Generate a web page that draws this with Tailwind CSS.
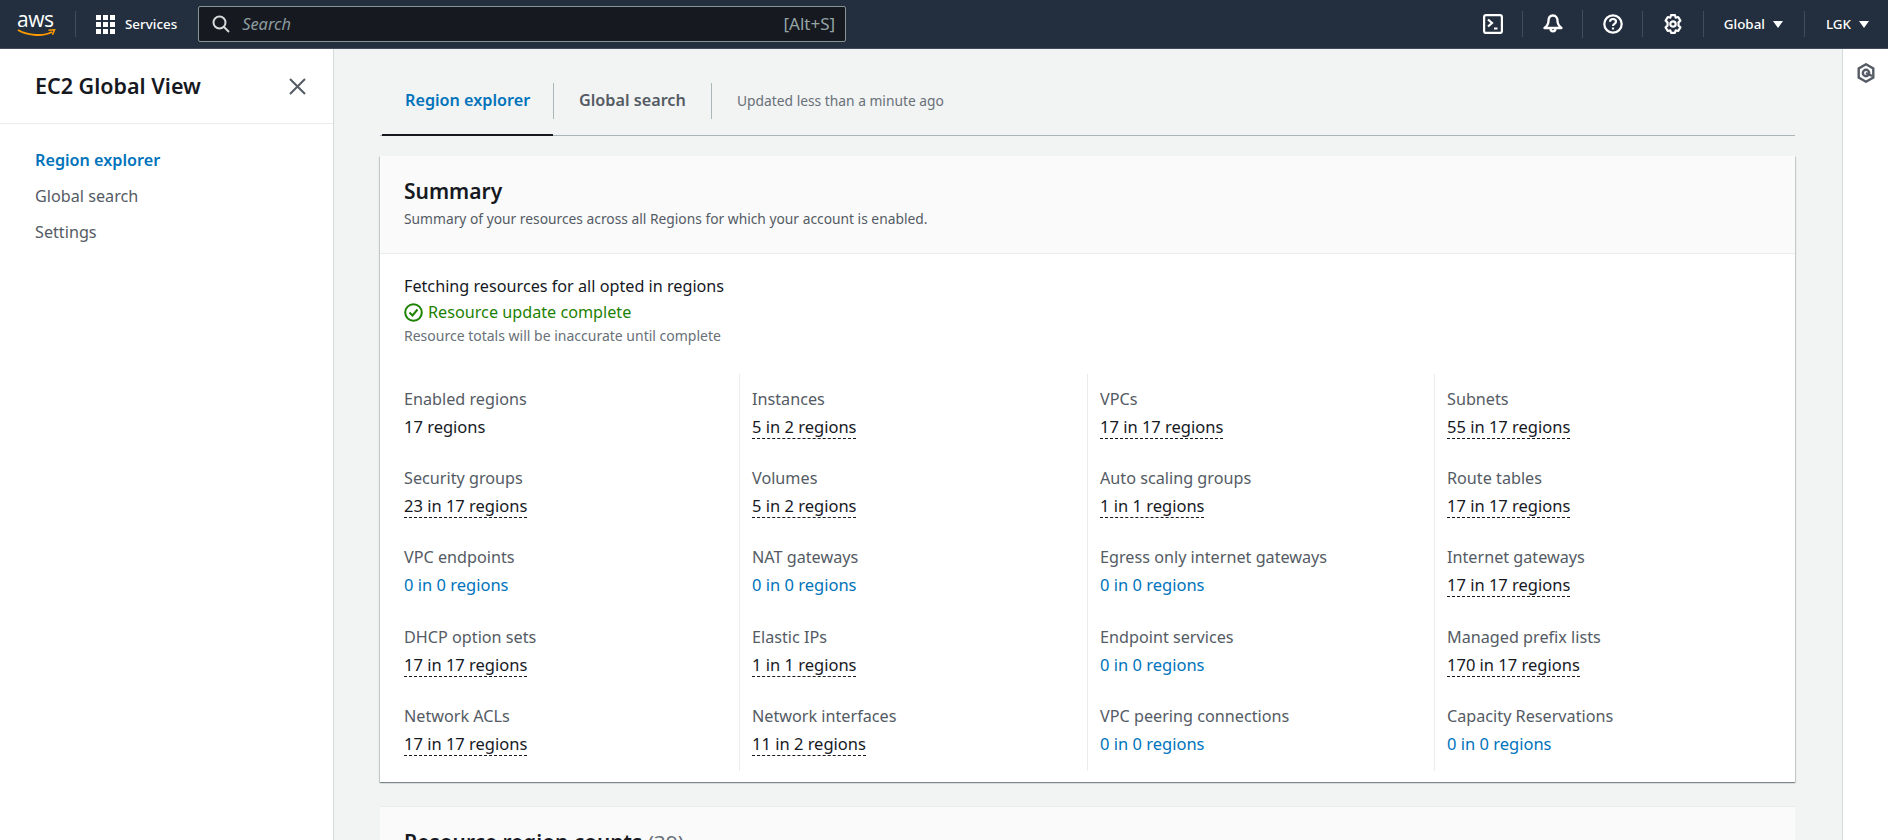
<!DOCTYPE html>
<html lang="en">
<head>
<meta charset="UTF-8">
<title>EC2 Global View</title>
<script src="https://cdn.jsdelivr.net/npm/@tailwindcss/browser@4"></script>
</head>
<body class="h-[840px] overflow-hidden bg-[#f2f3f3] font-['Noto_Sans',sans-serif] text-[16.200px] text-[#16191f]">

<!-- top nav -->
<header class="h-[49px] flex items-center bg-[#232f3e] border-b border-[#414d5c] text-white">
  <div class="w-[75px] h-[48px] pl-[17px] flex flex-col items-start justify-center shrink-0">
    <span class="font-['Open_Sans',sans-serif] text-[21px] leading-[17px] tracking-[-0.5px]">aws</span>
    <svg width="39" height="9" viewBox="0 0 39 9" class="mt-px"><path d="M1 1C11 7 27 7.500 35 3" fill="none" stroke="#f90" stroke-width="2"/><path d="M31.500 1.300l6-.5-2 5" fill="none" stroke="#f90" stroke-width="1.600"/></svg>
  </div>
  <div class="w-px h-[26px] bg-[#414d5c] shrink-0"></div>
  <svg width="19" height="19" viewBox="0 0 19 19" fill="#fff" class="ml-[20px] shrink-0">
    <rect x="0" y="0" width="5" height="5"/><rect x="7" y="0" width="5" height="5"/><rect x="14" y="0" width="5" height="5"/>
    <rect x="0" y="7" width="5" height="5"/><rect x="7" y="7" width="5" height="5"/><rect x="14" y="7" width="5" height="5"/>
    <rect x="0" y="14" width="5" height="5"/><rect x="7" y="14" width="5" height="5"/><rect x="14" y="14" width="5" height="5"/>
  </svg>
  <span class="ml-[10px] text-[13.400px] font-medium whitespace-nowrap">Services</span>
  <div class="ml-[21px] w-[648px] h-[36px] flex items-center bg-[#16191f] border border-[#879596] rounded-[2px] pl-[13px] pr-[10px] shrink-0">
    <svg width="18" height="18" viewBox="0 0 18 18" fill="none" stroke="#d5dbdb" stroke-width="2"><circle cx="7.500" cy="7.500" r="6"/><path d="M12 12l5 5"/></svg>
    <span class="ml-[12px] text-[16.400px] italic text-[#8d9ba0]">Search</span>
    <span class="ml-auto text-[17px] text-[#95a5a6]">[Alt+S]</span>
  </div>

  <div class="ml-auto flex items-center h-full">
    <svg width="20" height="20" viewBox="0 0 20 20" fill="none" stroke="#fff" stroke-width="2.200" class="mr-[19px]"><rect x="1.100" y="1.100" width="17.800" height="17.800" rx="2"/><path d="M5 5.500l4 3.500-4 3.500M11 14.500h3.500"/></svg>
    <div class="w-px h-[26px] bg-[#414d5c]"></div>
    <svg width="20" height="21" viewBox="0 0 20 21" fill="none" stroke="#fff" stroke-width="2.300" class="ml-[20px] mr-[19px]"><path d="M10 1.500c-3 0-4.500 2.500-4.500 5.500 0 3-1.500 5-4 7h17c-2.500-2-4-4-4-7 0-3-1.500-5.500-4.500-5.500z" stroke-linejoin="round"/><path d="M7.500 14.500a2.500 2.800 0 0 0 5 0"/></svg>
    <div class="w-px h-[28px] bg-[#414d5c]"></div>
    <svg width="20" height="20" viewBox="0 0 20 20" fill="none" stroke="#fff" stroke-width="2.200" class="ml-[20px] mr-[19px]"><circle cx="10" cy="10" r="8.700"/><path d="M7 7.800c0-1.700 1.300-2.800 3-2.800s3 1.100 3 2.600c0 2.400-3 2.200-3 4.400"/><path d="M10 13.500v2"/></svg>
    <div class="w-px h-[26px] bg-[#414d5c]"></div>
    <svg width="20" height="20" viewBox="0 0 20 20" fill="none" stroke="#fff" stroke-width="2.200" stroke-linejoin="round" class="mx-[20px]"><path d="M8 1.200h4l.7 2.500 2.500-.7 2.200 3.600-1.900 1.800v3.200l1.900 1.800-2.200 3.600-2.500-.7-.7 2.500H8l-.7-2.500-2.500.7-2.200-3.600 1.900-1.800V8.400L2.600 6.600 4.800 3l2.500.7z"/><circle cx="10" cy="10" r="2.700"/></svg>
    <div class="w-px h-[26px] bg-[#414d5c]"></div>
    <span class="ml-[20px] text-[13.400px] font-medium">Global</span>
    <svg width="10" height="7" viewBox="0 0 10 7" fill="#fff" class="ml-[8px]"><path d="M0 0h10L5 7z"/></svg>
    <div class="ml-[21px] w-px h-[26px] bg-[#414d5c]"></div>
    <span class="ml-[21px] text-[13.400px] font-medium">LGK</span>
    <svg width="10" height="7" viewBox="0 0 10 7" fill="#fff" class="ml-[8px] mr-[19px]"><path d="M0 0h10L5 7z"/></svg>
  </div>
</header>

<div class="flex h-[791px]">
  <!-- side nav -->
  <aside class="w-[334px] shrink-0 bg-white border-r border-[#d5dbdb]">
    <div class="h-[75px] pl-[35px] pr-[27px] flex items-center justify-between border-b border-[#eaeded]">
      <span class="text-[21.500px] font-semibold">EC2 Global View</span>
      <svg width="17" height="17" viewBox="0 0 17 17" fill="none" stroke="#545b64" stroke-width="2"><path d="M1 1l15 15M16 1L1 16"/></svg>
    </div>
    <nav class="pt-[18px] pl-[35px] flex flex-col text-[16.200px] leading-[36px] text-[#545b64]">
      <a class="font-semibold text-[#0073bb]">Region explorer</a>
      <a>Global search</a>
      <a>Settings</a>
    </nav>
  </aside>

  <!-- main -->
  <main class="w-[1508px] shrink-0 pl-[46px] pr-[47px]">
    <div class="h-[87px] pt-[34px] flex items-start border-b border-[#aab7b8]">
      <div class="ml-[2px] w-[171px] h-[53px] -mb-px border-b-2 border-[#16191f] pl-[23px] text-[#0073bb] font-semibold text-[16.200px] leading-[34px]">Region explorer</div>
      <div class="w-px h-[36px] bg-[#aab7b8]"></div>
      <div class="w-[157px] pl-[25px] text-[#545b64] font-semibold text-[16.200px] leading-[34px]">Global search</div>
      <div class="w-px h-[36px] bg-[#aab7b8]"></div>
      <div class="pl-[25px] text-[#687078] text-[13.800px] leading-[36px]">Updated less than a minute ago</div>
    </div>

    <section class="mt-[20px] h-[626px] bg-white shadow-[0_1px_1px_0_rgba(0,28,36,0.3),1px_1px_1px_0_rgba(0,28,36,0.15),-1px_1px_1px_0_rgba(0,28,36,0.15)]">
      <div class="h-[98px] pl-[24px] pt-[20px] bg-[#fafafa] border-b border-[#eaeded]">
        <h2 class="text-[21px] font-semibold leading-[30px]">Summary</h2>
        <p class="mt-px text-[13.800px] leading-[24px] text-[#545b64]">Summary of your resources across all Regions for which your account is enabled.</p>
      </div>
      <div class="pl-[24px] pt-[20px]">
        <p class="leading-[25px]">Fetching resources for all opted in regions</p>
        <p class="flex items-center leading-[26px] text-[#1d8102]">
          <svg width="19" height="19" viewBox="0 0 19 19" fill="none" stroke="#1d8102" stroke-width="2" class="mr-[5px]"><circle cx="9.500" cy="9.500" r="8.300"/><path d="M5.500 9.500l3 3 5-6"/></svg>
          Resource update complete
        </p>
        <p class="text-[14px] leading-[21px] text-[#687078]">Resource totals will be inaccurate until complete</p>
      </div>
      <div class="mt-[28px] grid grid-cols-[359px_348px_347px_1fr] h-[397px] text-[16.500px]">
        <!-- column 1 -->
        <div class="pl-[24px] pt-[12px]">
          <div class="h-[79.200px]"><p class="text-[16.200px] text-[#545b64] leading-[27px] mb-[2px]">Enabled regions</p><span>17 regions</span></div>
          <div class="h-[79.200px]"><p class="text-[16.200px] text-[#545b64] leading-[27px] mb-[2px]">Security groups</p><span class="border-b border-dashed border-[#16191f]">23 in 17 regions</span></div>
          <div class="h-[79.200px]"><p class="text-[16.200px] text-[#545b64] leading-[27px] mb-[2px]">VPC endpoints</p><span class="text-[#0073bb]">0 in 0 regions</span></div>
          <div class="h-[79.200px]"><p class="text-[16.200px] text-[#545b64] leading-[27px] mb-[2px]">DHCP option sets</p><span class="border-b border-dashed border-[#16191f]">17 in 17 regions</span></div>
          <div class="h-[67px]"><p class="text-[16.200px] text-[#545b64] leading-[27px] mb-[2px]">Network ACLs</p><span class="border-b border-dashed border-[#16191f]">17 in 17 regions</span></div>
        </div>
        <!-- column 2 -->
        <div class="pl-[12px] pt-[12px] border-l border-[#eaeded]">
          <div class="h-[79.200px]"><p class="text-[16.200px] text-[#545b64] leading-[27px] mb-[2px]">Instances</p><span class="border-b border-dashed border-[#16191f]">5 in 2 regions</span></div>
          <div class="h-[79.200px]"><p class="text-[16.200px] text-[#545b64] leading-[27px] mb-[2px]">Volumes</p><span class="border-b border-dashed border-[#16191f]">5 in 2 regions</span></div>
          <div class="h-[79.200px]"><p class="text-[16.200px] text-[#545b64] leading-[27px] mb-[2px]">NAT gateways</p><span class="text-[#0073bb]">0 in 0 regions</span></div>
          <div class="h-[79.200px]"><p class="text-[16.200px] text-[#545b64] leading-[27px] mb-[2px]">Elastic IPs</p><span class="border-b border-dashed border-[#16191f]">1 in 1 regions</span></div>
          <div class="h-[67px]"><p class="text-[16.200px] text-[#545b64] leading-[27px] mb-[2px]">Network interfaces</p><span class="border-b border-dashed border-[#16191f]">11 in 2 regions</span></div>
        </div>
        <!-- column 3 -->
        <div class="pl-[12px] pt-[12px] border-l border-[#eaeded]">
          <div class="h-[79.200px]"><p class="text-[16.200px] text-[#545b64] leading-[27px] mb-[2px]">VPCs</p><span class="border-b border-dashed border-[#16191f]">17 in 17 regions</span></div>
          <div class="h-[79.200px]"><p class="text-[16.200px] text-[#545b64] leading-[27px] mb-[2px]">Auto scaling groups</p><span class="border-b border-dashed border-[#16191f]">1 in 1 regions</span></div>
          <div class="h-[79.200px]"><p class="text-[16.200px] text-[#545b64] leading-[27px] mb-[2px]">Egress only internet gateways</p><span class="text-[#0073bb]">0 in 0 regions</span></div>
          <div class="h-[79.200px]"><p class="text-[16.200px] text-[#545b64] leading-[27px] mb-[2px]">Endpoint services</p><span class="text-[#0073bb]">0 in 0 regions</span></div>
          <div class="h-[67px]"><p class="text-[16.200px] text-[#545b64] leading-[27px] mb-[2px]">VPC peering connections</p><span class="text-[#0073bb]">0 in 0 regions</span></div>
        </div>
        <!-- column 4 -->
        <div class="pl-[12px] pt-[12px] border-l border-[#eaeded]">
          <div class="h-[79.200px]"><p class="text-[16.200px] text-[#545b64] leading-[27px] mb-[2px]">Subnets</p><span class="border-b border-dashed border-[#16191f]">55 in 17 regions</span></div>
          <div class="h-[79.200px]"><p class="text-[16.200px] text-[#545b64] leading-[27px] mb-[2px]">Route tables</p><span class="border-b border-dashed border-[#16191f]">17 in 17 regions</span></div>
          <div class="h-[79.200px]"><p class="text-[16.200px] text-[#545b64] leading-[27px] mb-[2px]">Internet gateways</p><span class="border-b border-dashed border-[#16191f]">17 in 17 regions</span></div>
          <div class="h-[79.200px]"><p class="text-[16.200px] text-[#545b64] leading-[27px] mb-[2px]">Managed prefix lists</p><span class="border-b border-dashed border-[#16191f]">170 in 17 regions</span></div>
          <div class="h-[67px]"><p class="text-[16.200px] text-[#545b64] leading-[27px] mb-[2px]">Capacity Reservations</p><span class="text-[#0073bb]">0 in 0 regions</span></div>
        </div>
      </div>
    </section>

    <section class="mt-[24px] h-[80px] bg-[#fafafa] border-t border-[#eaeded] pl-[24px] pt-[20px]">
      <h2 class="text-[20.800px] font-semibold leading-[30px]">Resource region counts <span class="font-normal text-[#687078]">(39)</span></h2>
    </section>
  </main>

  <!-- tools rail -->
  <aside class="flex-1 bg-white border-l border-[#d5dbdb] pt-[14px] flex justify-center">
    <svg width="18" height="20" viewBox="0 0 18 20" fill="none" stroke="#545b64" stroke-width="2.400"><path d="M9 1.300l7.300 4.200v9L9 18.700l-7.300-4.200v-9z"/><circle cx="9" cy="10" r="3.200"/><path d="M9 10l6 3"/></svg>
  </aside>
</div>
</body>
</html>
